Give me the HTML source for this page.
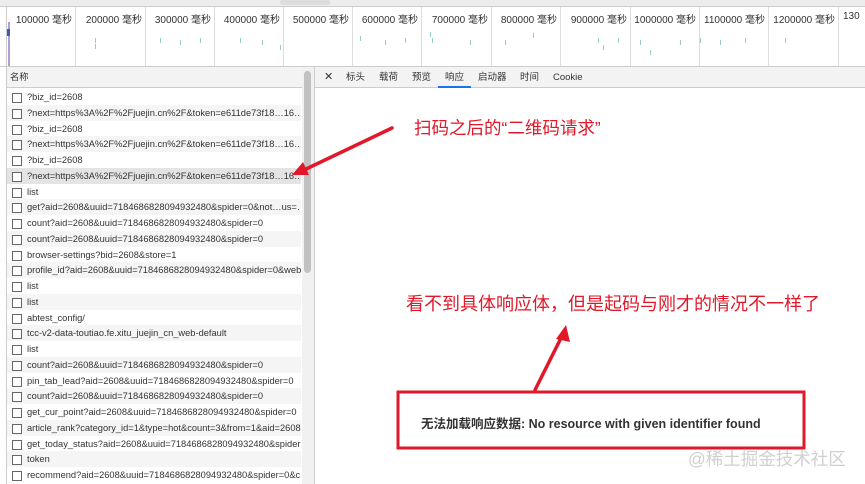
<!DOCTYPE html>
<html><head><meta charset="utf-8"><style>
*{margin:0;padding:0;box-sizing:border-box}
body{width:865px;height:484px;overflow:hidden;background:#fff;font-family:"Liberation Sans","Noto Sans CJK SC",sans-serif;position:relative;color:#303942}
.abs{position:absolute}
.tl{font-size:10px;color:#333;top:11px;text-align:right;width:80px}
.gl{top:20px;height:47px;width:1px;background:#ddd}
.row{position:absolute;left:7px;width:294px;height:15.75px;font-size:9.3px;line-height:16px;white-space:nowrap;overflow:hidden;padding-left:20px;color:#333}
.row:before{content:"";position:absolute;left:5px;top:4px;width:8px;height:8px;border:1px solid #666;background:#fff}
.tab{position:absolute;top:67px;font-size:9.5px;line-height:21px;color:#333}
</style></head><body>
<div class="abs" style="left:0;top:0;width:865px;height:7px;background:#ececec"></div>
<div class="abs" style="left:0;top:6px;width:865px;height:1px;background:#ccc"></div>
<div class="abs" style="left:280px;top:0;width:50px;height:5px;background:#ddd;border-radius:3px"></div>
<div class="abs" style="left:6px;top:7px;width:1px;height:60px;background:#ccc"></div>
<div class="abs" style="left:8px;top:22px;width:2px;height:44px;background:#b0a0d0"></div>
<div class="abs" style="left:7px;top:29px;width:3px;height:7px;background:#3060c0"></div>
<div id="tl"></div>
<div class="abs" style="left:0;top:66px;width:865px;height:1px;background:#ccc"></div>
<div class="abs" style="left:6px;top:67px;width:296px;height:21px;background:#f3f3f3;border-bottom:1px solid #ccc;font-size:9.3px;line-height:21px;padding-left:4px;color:#333">名称</div>
<div class="abs" style="left:6px;top:67px;width:1px;height:417px;background:#ccc"></div>
<div id="rows"></div>
<div class="abs" style="left:302px;top:67px;width:12px;height:417px;background:#f1f1f1"></div>
<div class="abs" style="left:304px;top:71px;width:7px;height:202px;background:#c1c1c1;border-radius:4px"></div>
<div class="abs" style="left:314px;top:67px;width:1px;height:417px;background:#ccc"></div>
<div class="abs" style="left:315px;top:67px;width:550px;height:21px;background:#f3f3f3;border-bottom:1px solid #ccc"></div>
<div class="tab" style="left:324px;font-size:11px">✕</div>
<div class="tab" style="left:346px">标头</div>
<div class="tab" style="left:379px">载荷</div>
<div class="tab" style="left:412px">预览</div>
<div class="tab" style="left:445px">响应</div>
<div class="abs" style="left:438px;top:86px;width:33px;height:2px;background:#1a73e8"></div>
<div class="tab" style="left:478px">启动器</div>
<div class="tab" style="left:520px">时间</div>
<div class="tab" style="left:553px">Cookie</div>
<div class="abs" style="left:414px;top:115px;font-size:17.5px;color:#e0182a;white-space:nowrap">扫码之后的“二维码请求”</div>
<div class="abs" style="left:406px;top:290px;font-size:18px;color:#e0182a;white-space:nowrap">看不到具体响应体，但是起码与刚才的情况不一样了</div>
<svg class="abs" style="left:0;top:0" width="865" height="484">
<line x1="392" y1="128" x2="304" y2="170" stroke="#e0182a" stroke-width="3.5" stroke-linecap="round"/>
<polygon points="292,175 303,162 309,175" fill="#e0182a"/>
<line x1="535" y1="390" x2="562" y2="336" stroke="#e0182a" stroke-width="3.5" stroke-linecap="round"/>
<polygon points="566,325 556,339 570,342" fill="#e0182a"/>
<rect x="398" y="392" width="406" height="56" fill="none" stroke="#e0182a" stroke-width="3"/>
</svg>
<div class="abs" style="left:421px;top:413px;font-size:12.5px;font-weight:bold;color:#333;white-space:nowrap">无法加载响应数据: No resource with given identifier found</div>
<div class="abs" style="left:688px;top:446px;font-size:17.5px;color:#d0d0d0;white-space:nowrap">@稀土掘金技术社区</div>
<script>
var t='';var xs=[75,145,214,283,352,421,491,560,630,699,768,838];
var lb=['100000','200000','300000','400000','500000','600000','700000','800000','900000','1000000','1100000','1200000'];
for(var i=0;i<xs.length;i++){t+='<div class="abs gl" style="left:'+xs[i]+'px;top:7px;height:60px"></div>';t+='<div class="abs tl" style="left:'+(xs[i]-83)+'px">'+lb[i]+' 毫秒</div>';}
t+='<div class="abs tl" style="left:843px;text-align:left">130</div>';
var dots=[[95,38],[95,44],[160,38],[180,40],[200,38],[240,38],[262,40],[280,45],[360,36],[385,40],[405,38],[430,32],[432,38],[470,40],[505,40],[533,33],[598,38],[618,38],[640,40],[680,40],[700,38],[720,40],[745,38],[785,38],[603,45],[650,50]];
for(var j=0;j<dots.length;j++)t+='<div class="abs" style="left:'+dots[j][0]+'px;top:'+dots[j][1]+'px;width:1px;height:5px;background:#9cc"></div>';
document.getElementById('tl').innerHTML=t;
var r=['?biz_id=2608','?next=https%3A%2F%2Fjuejin.cn%2F&token=e611de73f18…16…','?biz_id=2608','?next=https%3A%2F%2Fjuejin.cn%2F&token=e611de73f18…16…','?biz_id=2608','?next=https%3A%2F%2Fjuejin.cn%2F&token=e611de73f18…16…','list','get?aid=2608&uuid=7184686828094932480&spider=0&not…us=…','count?aid=2608&uuid=7184686828094932480&spider=0','count?aid=2608&uuid=7184686828094932480&spider=0','browser-settings?bid=2608&store=1','profile_id?aid=2608&uuid=7184686828094932480&spider=0&web…','list','list','abtest_config/','tcc-v2-data-toutiao.fe.xitu_juejin_cn_web-default','list','count?aid=2608&uuid=7184686828094932480&spider=0','pin_tab_lead?aid=2608&uuid=7184686828094932480&spider=0','count?aid=2608&uuid=7184686828094932480&spider=0','get_cur_point?aid=2608&uuid=7184686828094932480&spider=0','article_rank?category_id=1&type=hot&count=3&from=1&aid=2608…','get_today_status?aid=2608&uuid=7184686828094932480&spider=0','token','recommend?aid=2608&uuid=7184686828094932480&spider=0&c…'];
var h='';for(var k=0;k<r.length;k++){var bg=k==5?'#e4e4e4':(k%2?'#f5f5f5':'#fff');h+='<div class="row" style="top:'+(89+k*15.75)+'px;background:'+bg+'">'+r[k].replace(/&/g,'&amp;')+'</div>';}
document.getElementById('rows').innerHTML=h;
</script>
</body></html>
